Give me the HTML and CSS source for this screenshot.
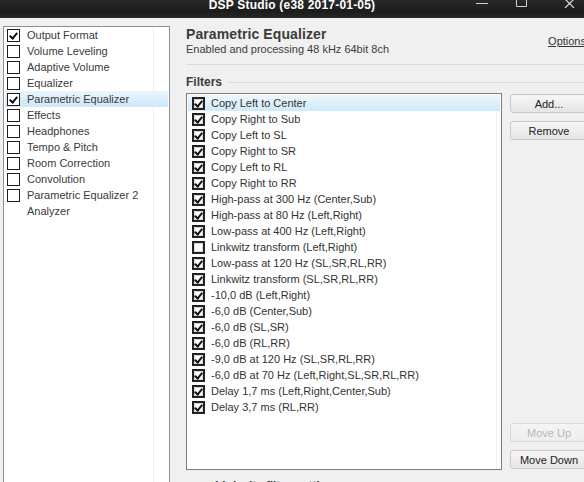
FILE: index.html
```html
<!DOCTYPE html>
<html lang="en">
<head>
    <meta charset="UTF-8">
    <title>DSP Studio</title>
    <link rel="stylesheet" href="styles.css">
</head>
<body>
    <div class="window">
        <div class="titlebar">
            <div></div>
            <div class="title">DSP Studio (e38 2017-01-05)</div>
            <div class="controls">
                <svg class="ctl-min" width="12" height="8" viewBox="0 0 12 8"><path d="M0 3.5h12" stroke="#cfcfcf" stroke-width="1"/></svg>
                <svg class="ctl-max" width="11" height="8" viewBox="0 0 11 8"><path d="M0.5 0v6.5h10V0" fill="none" stroke="#cfcfcf" stroke-width="1"/></svg>
                <svg class="ctl-close" width="13" height="8" viewBox="0 0 13 8"><path d="M1 -1l9 9M10 -1l-9 9" stroke="#d8d8d8" stroke-width="1.2"/></svg>
            </div>
        </div>

        <div class="main">
            <div class="nav-list">
                <div class="nav-item"><span class="cb checked"></span>Output Format</div>
                <div class="nav-item"><span class="cb"></span>Volume Leveling</div>
                <div class="nav-item"><span class="cb"></span>Adaptive Volume</div>
                <div class="nav-item"><span class="cb"></span>Equalizer</div>
                <div class="nav-item selected"><span class="cb checked"></span>Parametric Equalizer</div>
                <div class="nav-item"><span class="cb"></span>Effects</div>
                <div class="nav-item"><span class="cb"></span>Headphones</div>
                <div class="nav-item"><span class="cb"></span>Tempo &amp; Pitch</div>
                <div class="nav-item"><span class="cb"></span>Room Correction</div>
                <div class="nav-item"><span class="cb"></span>Convolution</div>
                <div class="nav-item"><span class="cb"></span>Parametric Equalizer 2</div>
                <div class="nav-item"><span class="cb none"></span>Analyzer</div>
            </div>

            <div class="content">
                <div class="page-header">
                    <div>
                        <h1 class="page-title">Parametric Equalizer</h1>
                        <div class="page-status">Enabled and processing 48 kHz 64bit 8ch</div>
                    </div>
                    <a class="options-link">Options</a>
                </div>

                <div class="group-title"><span>Filters</span></div>

                <div class="filters">
                    <div class="filter-list" id="filterList"></div>
                    <div class="filter-buttons">
                        <button class="btn">Add...</button>
                        <button class="btn">Remove</button>
                        <div class="spacer"></div>
                        <button class="btn" disabled>Move Up</button>
                        <button class="btn last">Move Down</button>
                    </div>
                </div>

                <div class="group-title lower"><span>Linkwitz filter settings</span></div>
            </div>
        </div>
    </div>

    <script>
        const filters = [
            ['Copy Left to Center', true],
            ['Copy Right to Sub', true],
            ['Copy Left to SL', true],
            ['Copy Right to SR', true],
            ['Copy Left to RL', true],
            ['Copy Right to RR', true],
            ['High-pass at 300 Hz (Center,Sub)', true],
            ['High-pass at 80 Hz (Left,Right)', true],
            ['Low-pass at 400 Hz (Left,Right)', true],
            ['Linkwitz transform (Left,Right)', false],
            ['Low-pass at 120 Hz (SL,SR,RL,RR)', true],
            ['Linkwitz transform (SL,SR,RL,RR)', true],
            ['-10,0 dB (Left,Right)', true],
            ['-6,0 dB (Center,Sub)', true],
            ['-6,0 dB (SL,SR)', true],
            ['-6,0 dB (RL,RR)', true],
            ['-9,0 dB at 120 Hz (SL,SR,RL,RR)', true],
            ['-6,0 dB at 70 Hz (Left,Right,SL,SR,RL,RR)', true],
            ['Delay 1,7 ms (Left,Right,Center,Sub)', true],
            ['Delay 3,7 ms (RL,RR)', true]
        ];

        const list = document.getElementById('filterList');
        filters.forEach((f, i) => {
            const row = document.createElement('div');
            row.className = 'filter-row' + (i === 0 ? ' selected' : '');
            row.innerHTML = `<span class="cb box ${f[1] ? 'checked' : ''}"></span>${f[0]}`;
            list.appendChild(row);
        });
    </script>
</body>
</html>
```

FILE: styles.css
```css
* {
    box-sizing: border-box;
}
body {
    margin: 0;
    background: #f0f0f0;
    font-family: 'Liberation Sans', Arial, sans-serif;
    font-size: 11px;
    color: #333;
    overflow: hidden;
}

.window { width: 584px; height: 482px; overflow: hidden; display: flex; flex-direction: column; }

.titlebar {
    height: 18px; flex: none;
    background: linear-gradient(#2a2a2a 0%, #1c1c1c 60%, #262626 100%);
    display: grid; grid-template-columns: 1fr auto 1fr; align-items: start;
    color: #fff;
}
.title {
    font-weight: bold; font-size: 12px; line-height: 10px; letter-spacing: 0.2px;
}
.controls { display: flex; justify-content: flex-end; align-items: flex-start; padding-right: 7px; }
.controls svg { display: block; }
.ctl-max { margin-left: 28px; }
.ctl-close { margin-left: 37px; }

.main { flex: 1; display: flex; padding: 8px 0 0 3px; gap: 16px; min-height: 0; }

.nav-list {
    width: 167px; flex: none; height: 470px;
    background: #fff linear-gradient(90deg, transparent 149px, #eef2f5 149px, #eef2f5 150px, transparent 150px);
    border: 1px solid #8e8f8f;
    padding-top: 0;
}
.nav-item {
    height: 16px; display: flex; align-items: center; padding-left: 3px;
    color: #3a3a3a; white-space: nowrap;
}
.nav-item.selected {
    background: linear-gradient(#eaf5fd, #cde8f8);
    margin-left: 1px; margin-right: 1px; padding-left: 2px;
}

.cb {
    width: 13px; height: 13px; flex: none; margin-right: 7px;
    border: 1px solid #1c1c1c; background: #fff;
    position: relative;
}
.cb.none { border-color: transparent; background: transparent; }
.cb.checked::after {
    content: ''; position: absolute; left: 3px; top: 1px;
    width: 3px; height: 6px;
    border-right: 2px solid #111; border-bottom: 2px solid #111;
    transform: rotate(40deg);
}
.cb.box { border-width: 2px; border-color: #222; background: #fff; box-shadow: inset 0 0 0 1px #d8d8d8; margin-right: 6px; }
.cb.box.checked::after { left: 2px; top: 0; }

.content { flex: 1; display: flex; flex-direction: column; min-width: 0; }

.page-header {
    display: flex; justify-content: space-between; align-items: center;
    padding-bottom: 8px; border-bottom: 1px solid #dcdcdc; margin-right: -2px;
}
.page-title {
    margin: 0; font-size: 14px; font-weight: bold; color: #3c3c3c; line-height: 17px;
    letter-spacing: 0.1px;
}
.page-status { color: #3c3c3c; line-height: 13px; }
.options-link { color: #333; text-decoration: underline; margin-right: 0; }

.group-title {
    display: flex; align-items: center; gap: 6px; margin-top: 10px;
    font-weight: bold; font-size: 12px; color: #3c3c3c; line-height: 14px;
}
.group-title::after { content: ''; flex: 1; height: 1px; background: #dcdcdc; }
.group-title.lower { margin-top: 9px; padding-left: 29px; }

.filters { display: flex; gap: 8px; margin-top: 4px; }

.filter-list {
    width: 316px; height: 377px; flex: none;
    background: #fff linear-gradient(90deg, transparent 309px, #eef2f5 309px, #eef2f5 310px, transparent 310px);
    border: 1px solid #7e7e7e;
    padding-top: 1px;
}
.filter-row {
    height: 16px; display: flex; align-items: center; padding-left: 5px;
    white-space: nowrap; color: #333;
}
.filter-row.selected {
    background: linear-gradient(#eef7fd, #cfe9f9);
    margin: 0 1px; padding-left: 4px;
}

.filter-buttons { flex: 1; display: flex; flex-direction: column; padding-top: 1px; margin-right: -8px; }
.btn {
    height: 19px; width: 78px; margin-bottom: 8px; flex: none;
    font-family: inherit; font-size: 11px; color: #222;
    border: 1px solid #c8c8c8; border-radius: 3px;
    background: linear-gradient(#f6f6f6, #e6e6e6);
    padding: 0;
}
.btn.last { margin-bottom: 1px; }
.btn:disabled { color: #b8b8b8; border-color: #dadada; background: linear-gradient(#f5f5f5, #ededed); }
.spacer { flex: 1; }
```
